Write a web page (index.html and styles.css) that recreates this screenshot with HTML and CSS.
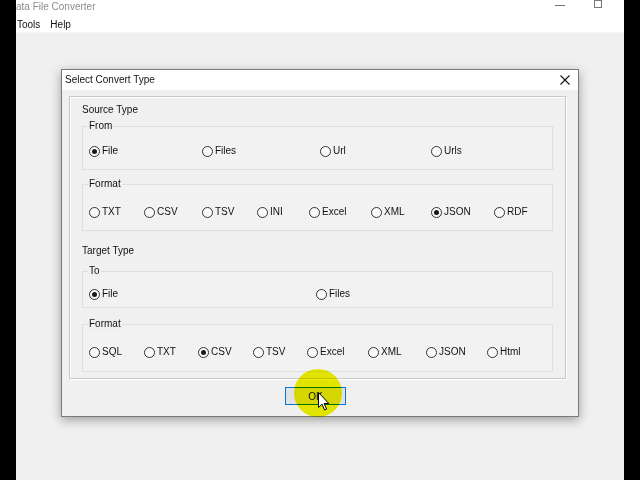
FILE: index.html
```html
<!DOCTYPE html>
<html lang="en">
<head>
    <meta charset="UTF-8">
    <title>Data File Converter</title>
    <link rel="stylesheet" href="styles.css">
</head>
<body>
    <div class="app">
        <div class="app-title">
            <span class="app-name">ata File Converter</span>
            <span class="win-min"></span>
            <span class="win-max"></span>
        </div>
        <div class="menubar">
            <span>Tools</span>
            <span>Help</span>
        </div>

        <div class="dialog">
            <div class="dialog-title">
                <span>Select Convert Type</span>
                <svg class="close" width="10" height="10" viewBox="0 0 10 10">
                    <path d="M0.5 0.5 L9.5 9.5 M9.5 0.5 L0.5 9.5" stroke="#111" stroke-width="1.1"/>
                </svg>
            </div>

            <div class="panel">
                <div class="section-label">Source Type</div>

                <div class="group group-from">
                    <div class="legend">From</div>
                    <div class="radios cols-from">
                        <label class="radio"><span class="dot checked"></span>File</label>
                        <label class="radio"><span class="dot"></span>Files</label>
                        <label class="radio"><span class="dot"></span>Url</label>
                        <label class="radio"><span class="dot"></span>Urls</label>
                    </div>
                </div>

                <div class="group group-format">
                    <div class="legend">Format</div>
                    <div class="radios cols-src">
                        <label class="radio"><span class="dot"></span>TXT</label>
                        <label class="radio"><span class="dot"></span>CSV</label>
                        <label class="radio"><span class="dot"></span>TSV</label>
                        <label class="radio"><span class="dot"></span>INI</label>
                        <label class="radio"><span class="dot"></span>Excel</label>
                        <label class="radio"><span class="dot"></span>XML</label>
                        <label class="radio"><span class="dot checked"></span>JSON</label>
                        <label class="radio"><span class="dot"></span>RDF</label>
                    </div>
                </div>

                <div class="section-label target">Target Type</div>

                <div class="group group-to">
                    <div class="legend">To</div>
                    <div class="radios cols-to">
                        <label class="radio"><span class="dot checked"></span>File</label>
                        <label class="radio"><span class="dot"></span>Files</label>
                    </div>
                </div>

                <div class="group group-format2">
                    <div class="legend">Format</div>
                    <div class="radios cols-tgt">
                        <label class="radio"><span class="dot"></span>SQL</label>
                        <label class="radio"><span class="dot"></span>TXT</label>
                        <label class="radio"><span class="dot checked"></span>CSV</label>
                        <label class="radio"><span class="dot"></span>TSV</label>
                        <label class="radio"><span class="dot"></span>Excel</label>
                        <label class="radio"><span class="dot"></span>XML</label>
                        <label class="radio"><span class="dot"></span>JSON</label>
                        <label class="radio"><span class="dot"></span>Html</label>
                    </div>
                </div>
            </div>

            <button class="ok">OK</button>
        </div>

        <!-- recording overlay: click highlight + pointer -->
        <div class="click-mark"></div>
        <svg class="pointer" width="12" height="19" viewBox="0 0 12 19">
            <path d="M0.5 0.5 L0.5 15.5 L4 12.2 L6.6 18 L8.6 17.1 L6.1 11.5 L10.8 11.5 Z" fill="#fff" stroke="#000" stroke-width="1" stroke-linejoin="round"/>
        </svg>
    </div>
</body>
</html>
```

FILE: styles.css
```css
* {
    box-sizing: border-box;
    margin: 0;
    padding: 0;
}

body {
    background: #000;
    width: 640px;
    height: 480px;
    overflow: hidden;
    font-family: "Liberation Sans", Arial, sans-serif;
    font-size: 10px;
    color: #111;
}

.app {
    position: relative;
    width: 608px;
    height: 480px;
    margin: 0 auto;
    background: #f0f0f0;
    overflow: hidden;
}

.app-title {
    display: flex;
    align-items: center;
    height: 12px;
    background: #fff;
    line-height: 11px;
}

.app-name {
    color: #8c8c8c;
    flex: 1;
}

.win-min {
    width: 10px;
    height: 1px;
    margin-top: -2px;
    background: #777;
}

.win-max {
    width: 8px;
    height: 8px;
    margin: -4px 22px 0 29px;
    border: 1px solid #777;
}

.menubar {
    display: flex;
    gap: 10px;
    height: 21px;
    padding: 7px 0 0 1px;
    background: #fff;
    line-height: 12px;
    border-bottom: 1px solid #f6f6f6;
}

.dialog {
    position: absolute;
    left: 45px;
    top: 69px;
    width: 518px;
    height: 348px;
    border: 1px solid #7a7a7a;
    background: #f0f0f0;
    box-shadow: 0 3px 10px rgba(0,0,0,0.35);
}

.dialog-title {
    display: flex;
    justify-content: space-between;
    align-items: center;
    height: 20px;
    padding: 0 8px 1px 3px;
    background: #fff;
    line-height: 12px;
}

.panel {
    width: 497px;
    margin: 6px 0 0 7px;
    padding: 7px 12px 6px 12px;
    border: 1px solid #c8c8c8;
    box-shadow: inset 1px 1px 0 #fff, 1px 1px 0 #fff;
}

.section-label {
    line-height: 12px;
    height: 12px;
}

.section-label.target {
    margin-top: 14px;
}

.group {
    width: 471px;
    border: 1px solid #dedede;
    background: #f2f2f2;
}

.legend {
    display: table;
    margin: -7px 0 0 5px;
    padding: 0 1px;
    height: 12px;
    line-height: 12px;
    background: #f0f0f0;
}

.group-from {
    margin-top: 10px;
    height: 44px;
}

.group-format {
    margin-top: 14px;
    height: 47px;
}

.group-to {
    margin-top: 14px;
    height: 37px;
}

.group-format2 {
    margin-top: 16px;
    height: 48px;
}

.radios {
    display: grid;
    padding-left: 6px;
    line-height: 14px;
}

.group-from .radios { margin-top: 12px; }
.group-format .radios { margin-top: 15px; }
.group-to .radios { margin-top: 10px; }
.group-format2 .radios { margin-top: 15px; }

.cols-from {
    grid-template-columns: 113px 118px 111px auto;
}

.cols-src {
    grid-template-columns: 55px 58px 55px 52px 62px 60px 63px auto;
}

.cols-to {
    grid-template-columns: 227px auto;
}

.cols-tgt {
    grid-template-columns: 55px 54px 55px 54px 61px 58px 61px auto;
}

.radio {
    display: flex;
    align-items: center;
    gap: 2px;
}

.dot {
    display: grid;
    place-items: center;
    width: 11px;
    height: 11px;
    border: 1px solid #333;
    border-radius: 50%;
    background: #fafafa;
}

.dot.checked::after {
    content: "";
    width: 5px;
    height: 5px;
    border-radius: 50%;
    background: #1a1a1a;
}

.ok {
    display: block;
    width: 61px;
    height: 18px;
    margin: 8px 0 0 223px;
    border: 1px solid #0078d7;
    background: #e1e1e1;
    font: inherit;
    color: #111;
}

.click-mark {
    position: absolute;
    left: 278px;
    top: 369px;
    width: 48px;
    height: 48px;
    border-radius: 50%;
    background: #f2f200;
    mix-blend-mode: multiply;
}

.pointer {
    position: absolute;
    left: 302px;
    top: 392px;
}
```
